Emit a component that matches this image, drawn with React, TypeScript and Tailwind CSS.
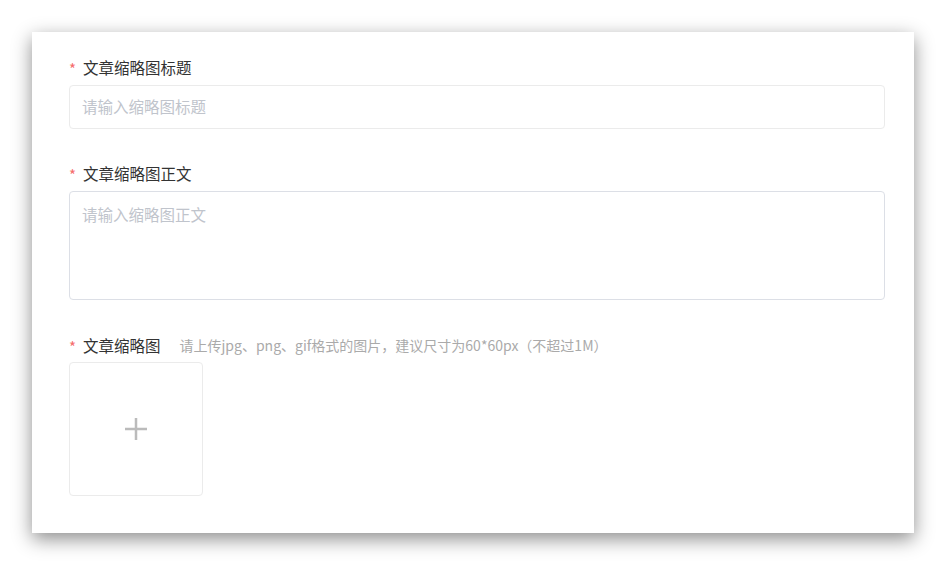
export default function App() {
  return (
    <div className="w-[946px] h-[565px] bg-white pt-[32px] pl-[32px] font-['Noto_Sans_CJK_SC',sans-serif]">
      <div className="w-[882px] h-[501px] bg-white shadow-[0_6px_18px_rgba(0,0,0,0.45)] pt-[24px] pl-[37px] pr-[29px] flex flex-col">
        <FieldLabel text="文章缩略图标题" />
        <div className="mt-[7px] h-[44px] border border-[#ebebeb] rounded-[4px] px-[12px] flex items-center">
          <span className="text-[15.5px] text-[#c0c4cc]">请输入缩略图标题</span>
        </div>

        <div className="mt-[33px]">
          <FieldLabel text="文章缩略图正文" />
        </div>
        <div className="mt-[7px] h-[109px] border border-[#dcdfe6] rounded-[4px] px-[12px] pt-[10px]">
          <span className="text-[15.5px] leading-[22px] text-[#c0c4cc]">请输入缩略图正文</span>
        </div>

        <div className="mt-[34px] flex items-center">
          <FieldLabel text="文章缩略图" />
          <span className="ml-[19px] text-[14px] leading-[22px] text-[#aaaaaa]">
            请上传jpg、png、gif格式的图片，建议尺寸为60*60px（不超过1M）
          </span>
        </div>
        <div className="mt-[6px] w-[134px] h-[134px] border border-[#ebebeb] rounded-[4px] flex items-center justify-center">
          <svg width="24" height="24" viewBox="0 0 24 24">
            <path d="M12 1v22M1 12h22" stroke="#bbbbbb" strokeWidth="2.5" fill="none" />
          </svg>
        </div>
      </div>
    </div>
  );
}

function FieldLabel({ text }: { text: string }) {
  return (
    <div className="flex items-center h-[22px]">
      <span className="text-[#f56c6c] text-[15px] leading-[22px] w-[14px] pt-[4px]">*</span>
      <span className="text-[15.5px] leading-[22px] text-[#333333]">{text}</span>
    </div>
  );
}
